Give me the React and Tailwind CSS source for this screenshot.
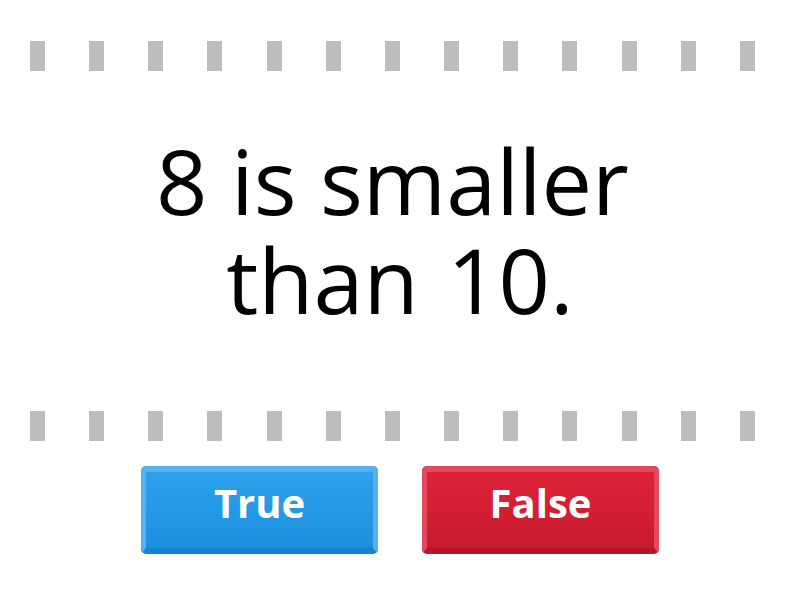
const Marks = () => (
  <div className="ml-[30px] flex w-[725px] justify-between">
    {Array.from({ length: 13 }).map((_, i) => (
      <span key={i} className="h-[30px] w-[15px] bg-[#bdbdbd]" />
    ))}
  </div>
);

const AnswerButton = ({ label, tone }) => {
  const styles =
    tone === "blue"
      ? {
          shell: "border-[#55b2ef] border-b-[#1683d2] bg-[#2a9de9]",
          face: "bg-gradient-to-b from-[#2ea1ec] to-[#1b8fe1]",
        }
      : {
          shell: "border-[#e14a5c] border-b-[#b5172a] bg-[#d81f35]",
          face: "bg-gradient-to-b from-[#de2238] to-[#c81b2f]",
        };

  return (
    <button
      className={`h-[88px] w-[237px] rounded-[5px] border-x-[5px] border-t-[6px] border-b-[6px] p-0 ${styles.shell}`}
    >
      <span
        className={`flex h-full w-full items-center justify-center pb-[14px] text-[40px] font-bold text-white ${styles.face}`}
      >
        {label}
      </span>
    </button>
  );
};

export default function App() {
  return (
    <div
      className="flex h-[600px] w-[800px] flex-col bg-white"
      style={{ fontFamily: '"Open Sans", "Noto Sans", sans-serif' }}
    >
      <div className="pt-[41px]">
        <Marks />
      </div>
      <div className="flex h-[340px] items-center justify-center pb-[22px]">
        <div className="flex flex-col items-center text-[90px] leading-[99px] text-black">
          <span className="pr-[15px]">8 is smaller</span>
          <span className="[word-spacing:5px]">than 10.</span>
        </div>
      </div>
      <Marks />
      <div className="mt-[25px] flex justify-center gap-[44px]">
        <AnswerButton label="True" tone="blue" />
        <AnswerButton label="False" tone="red" />
      </div>
    </div>
  );
}
